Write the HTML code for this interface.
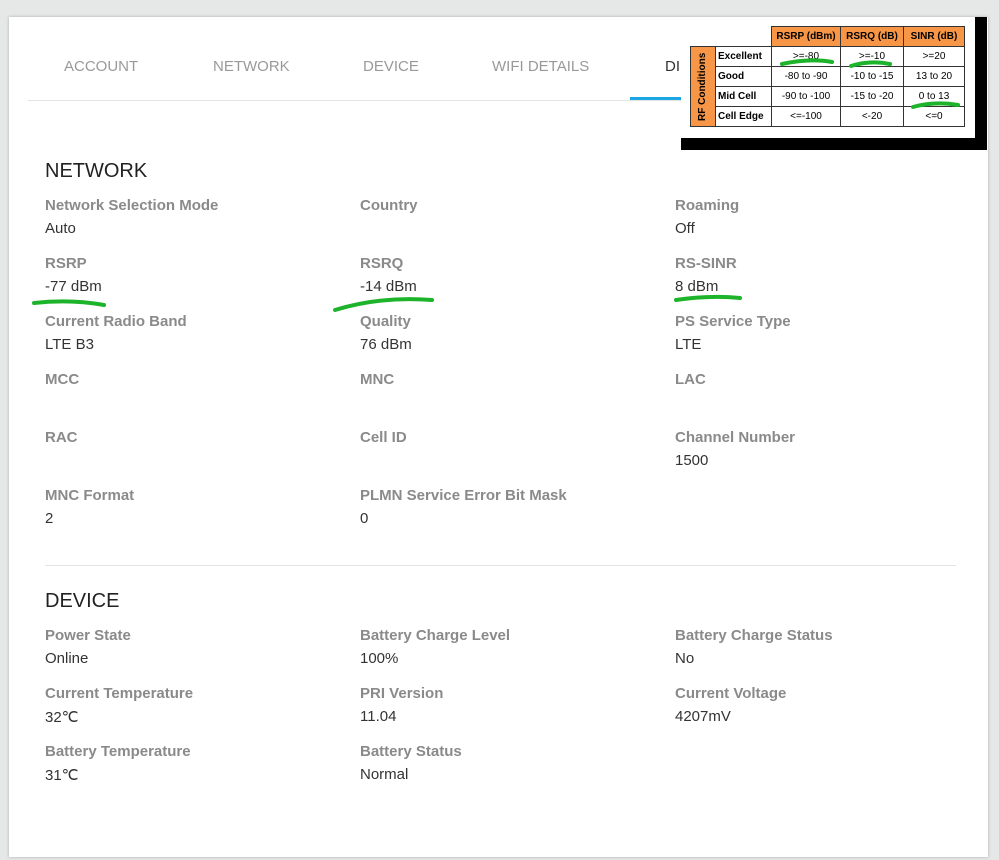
<!DOCTYPE html><html><head><style>
body{margin:0;width:999px;height:860px;background:#e6e7e7;font-family:"Liberation Sans",sans-serif;position:relative;overflow:hidden}
.card{position:absolute;left:9px;top:17px;width:979px;height:840px;background:#fff;box-shadow:0 0 3px rgba(0,0,0,.25)}
.a{position:absolute;white-space:nowrap}
.tab{font-size:15px;color:#999;top:58px}
.h{font-size:20px;color:#222}
.l{font-size:15px;color:#8a8a8a;font-weight:bold}
.v{font-size:15px;color:#333}
table{border-collapse:collapse;font-size:10px;font-family:"Liberation Sans",sans-serif;table-layout:fixed}
td{border:1px solid #333;text-align:center;height:19px;padding:0;line-height:10px}
</style></head><body>
<div class="card"></div>
<div class="a tab" style="left:64px">ACCOUNT</div>
<div class="a tab" style="left:213px">NETWORK</div>
<div class="a tab" style="left:363px">DEVICE</div>
<div class="a tab" style="left:492px">WIFI DETAILS</div>
<div class="a tab" style="left:665px;color:#333">DI</div>
<div class="a" style="left:28px;top:100px;width:660px;height:1px;background:#e4e4e4"></div>
<div class="a" style="left:630px;top:97px;width:52px;height:3px;background:#1aa6e0"></div>
<div class="a" style="left:681px;top:17px;width:306px;height:133px;background:#000"></div>
<div class="a" style="left:681px;top:17px;width:294px;height:121px;background:#fff"></div>
<table class="a" style="left:690px;top:26px;width:275px">
<colgroup><col style="width:25px"><col style="width:56px"><col style="width:69px"><col style="width:63px"><col></colgroup>
<tr><td style="border:none"></td><td style="border:none"></td><td style="background:#f79646;font-weight:bold">RSRP (dBm)</td><td style="background:#f79646;font-weight:bold">RSRQ (dB)</td><td style="background:#f79646;font-weight:bold">SINR (dB)</td></tr>
<tr><td rowspan="4" style="background:#f79646;font-weight:bold"><div style="writing-mode:vertical-rl;transform:rotate(180deg);margin:0 auto;height:78px;text-align:center;line-height:24px">RF Conditions</div></td><td style="text-align:left;font-weight:bold;padding-left:2px">Excellent</td><td>&gt;=-80</td><td>&gt;=-10</td><td>&gt;=20</td></tr>
<tr><td style="text-align:left;font-weight:bold;padding-left:2px">Good</td><td>-80 to -90</td><td>-10 to -15</td><td>13 to 20</td></tr>
<tr><td style="text-align:left;font-weight:bold;padding-left:2px">Mid Cell</td><td>-90 to -100</td><td>-15 to -20</td><td>0 to 13</td></tr>
<tr><td style="text-align:left;font-weight:bold;padding-left:2px">Cell Edge</td><td>&lt;=-100</td><td>&lt;-20</td><td>&lt;=0</td></tr>
</table>
<div class="a h" style="left:45px;top:160px">NETWORK</div>
<div class="a l" style="left:45px;top:197px">Network Selection Mode</div><div class="a v" style="left:45px;top:220px">Auto</div>
<div class="a l" style="left:360px;top:197px">Country</div>
<div class="a l" style="left:675px;top:197px">Roaming</div><div class="a v" style="left:675px;top:220px">Off</div>
<div class="a l" style="left:45px;top:255px">RSRP</div><div class="a v" style="left:45px;top:278px">-77 dBm</div>
<div class="a l" style="left:360px;top:255px">RSRQ</div><div class="a v" style="left:360px;top:278px">-14 dBm</div>
<div class="a l" style="left:675px;top:255px">RS-SINR</div><div class="a v" style="left:675px;top:278px">8 dBm</div>
<div class="a l" style="left:45px;top:313px">Current Radio Band</div><div class="a v" style="left:45px;top:336px">LTE B3</div>
<div class="a l" style="left:360px;top:313px">Quality</div><div class="a v" style="left:360px;top:336px">76 dBm</div>
<div class="a l" style="left:675px;top:313px">PS Service Type</div><div class="a v" style="left:675px;top:336px">LTE</div>
<div class="a l" style="left:45px;top:371px">MCC</div>
<div class="a l" style="left:360px;top:371px">MNC</div>
<div class="a l" style="left:675px;top:371px">LAC</div>
<div class="a l" style="left:45px;top:429px">RAC</div>
<div class="a l" style="left:360px;top:429px">Cell ID</div>
<div class="a l" style="left:675px;top:429px">Channel Number</div><div class="a v" style="left:675px;top:452px">1500</div>
<div class="a l" style="left:45px;top:487px">MNC Format</div><div class="a v" style="left:45px;top:510px">2</div>
<div class="a l" style="left:360px;top:487px">PLMN Service Error Bit Mask</div><div class="a v" style="left:360px;top:510px">0</div>
<div class="a" style="left:45px;top:565px;width:911px;height:1px;background:#e4e4e4"></div>
<div class="a h" style="left:45px;top:590px">DEVICE</div>
<div class="a l" style="left:45px;top:627px">Power State</div><div class="a v" style="left:45px;top:650px">Online</div>
<div class="a l" style="left:360px;top:627px">Battery Charge Level</div><div class="a v" style="left:360px;top:650px">100%</div>
<div class="a l" style="left:675px;top:627px">Battery Charge Status</div><div class="a v" style="left:675px;top:650px">No</div>
<div class="a l" style="left:45px;top:685px">Current Temperature</div><div class="a v" style="left:45px;top:708px">32℃</div>
<div class="a l" style="left:360px;top:685px">PRI Version</div><div class="a v" style="left:360px;top:708px">11.04</div>
<div class="a l" style="left:675px;top:685px">Current Voltage</div><div class="a v" style="left:675px;top:708px">4207mV</div>
<div class="a l" style="left:45px;top:743px">Battery Temperature</div><div class="a v" style="left:45px;top:766px">31℃</div>
<div class="a l" style="left:360px;top:743px">Battery Status</div><div class="a v" style="left:360px;top:766px">Normal</div>
<svg class="a" style="left:0;top:0" width="999" height="860"><g fill="none" stroke="#1db32a" stroke-width="4" stroke-linecap="round">
<path d="M34 303 Q70 299 104 305"/><path d="M335 310 Q380 296 432 300"/><path d="M676 300 Q710 295 740 298"/>
<path d="M782 64 Q810 58 832 62"/><path d="M851 66 Q870 60 890 64"/><path d="M913 107 Q935 101 958 105"/></g></svg>
</body></html>
